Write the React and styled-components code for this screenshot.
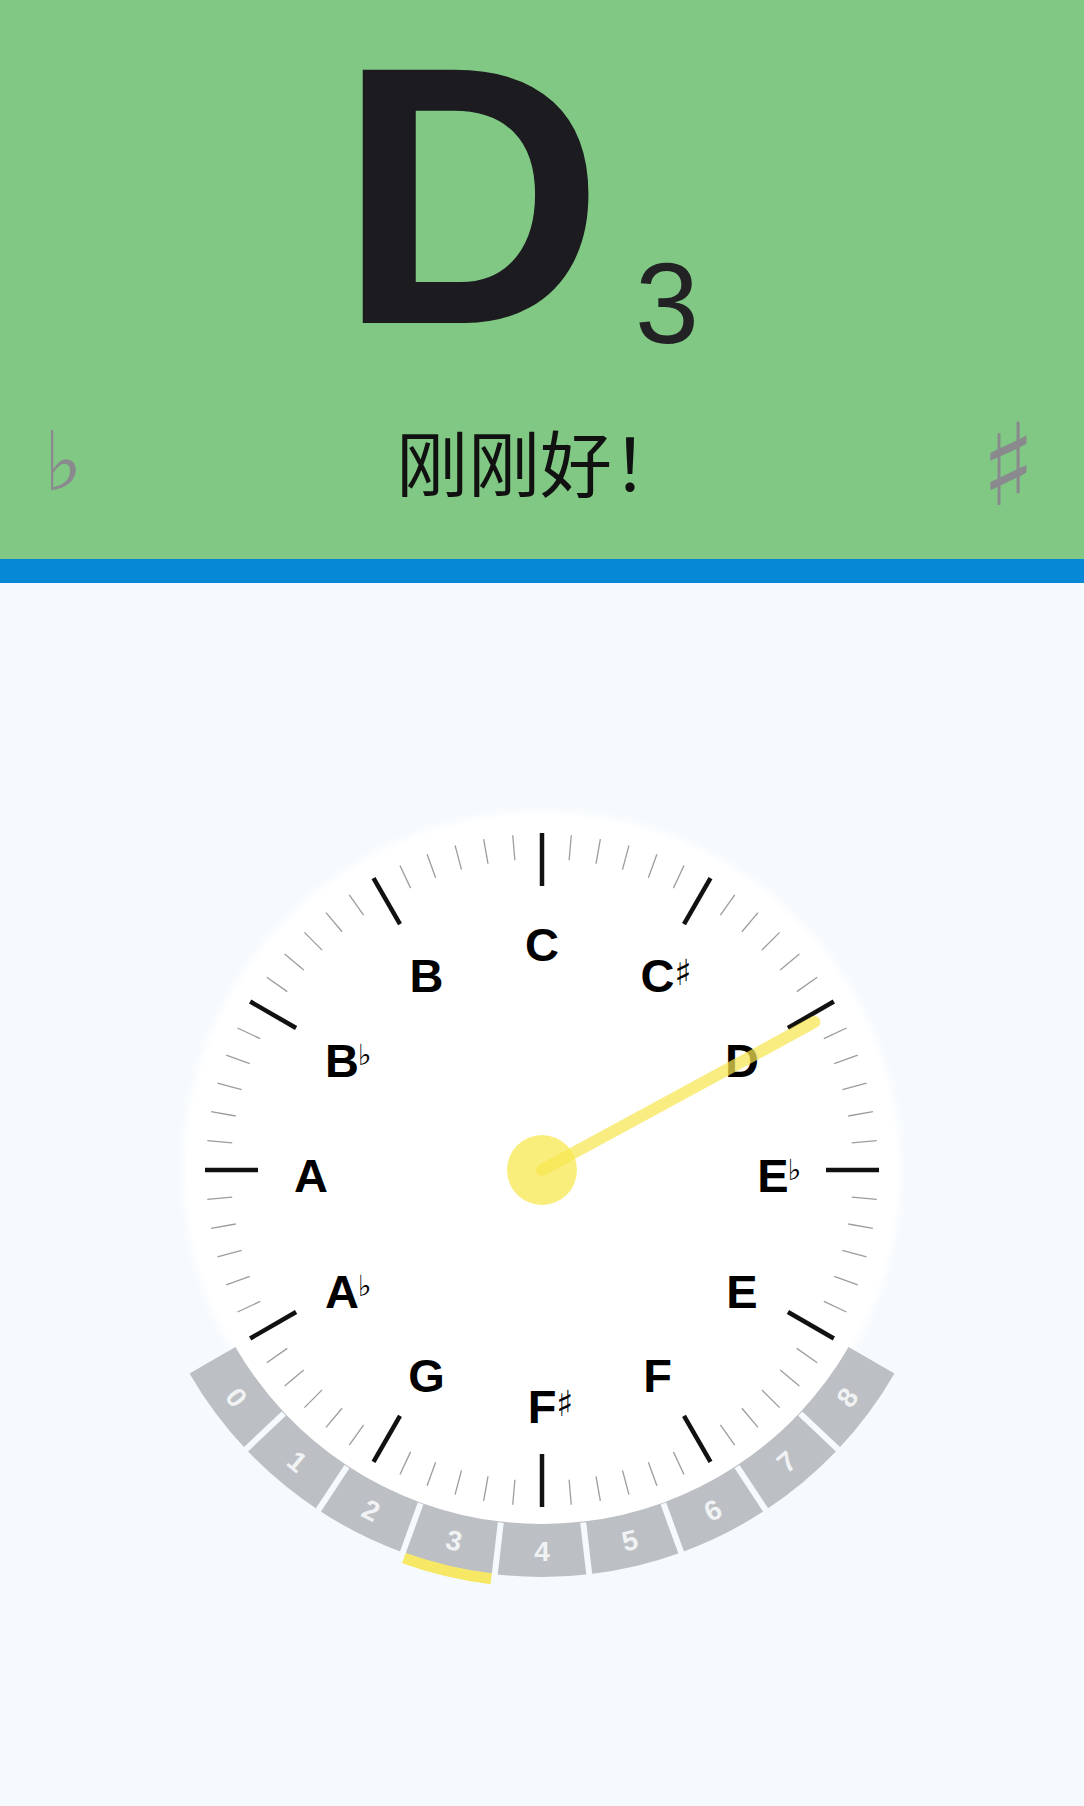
import React from 'react';
import styled, { createGlobalStyle } from 'styled-components';

const GlobalStyle = createGlobalStyle`
  html, body {
    margin: 0;
    padding: 0;
    background: #f5fafe;
  }
  body {
    font-family: "Liberation Sans", Arial, sans-serif;
  }
`;

const BG = '#f5fafe';
const C = 430;

const polar = (r, deg) => {
  const t = (deg * Math.PI) / 180;
  return { x: C + r * Math.sin(t), y: C - r * Math.cos(t) };
};

const notes = [
  { n: 'C' },
  { n: 'C', acc: 'sharp' },
  { n: 'D' },
  { n: 'E', acc: 'flat' },
  { n: 'E' },
  { n: 'F' },
  { n: 'F', acc: 'sharp' },
  { n: 'G' },
  { n: 'A', acc: 'flat' },
  { n: 'A' },
  { n: 'B', acc: 'flat' },
  { n: 'B' },
];

const advance = { A: 0.722, B: 0.722, C: 0.722, D: 0.722, E: 0.667, F: 0.611, G: 0.778 };

const LABEL_SIZE = 47;
const NEEDLE_ANGLE = 61.5;
const CURRENT_OCTAVE = 3;

const Page = styled.div`
  min-height: 1806px;
  display: flex;
  flex-direction: column;
  background: ${BG};
`;

const Header = styled.header`
  height: 559px;
  box-sizing: border-box;
  padding-top: 46px;
  background: #80c884;
  display: flex;
  flex-direction: column;
`;

const NoteRow = styled.div`
  text-align: center;
  padding-right: 47px;
  font-family: "Liberation Sans", Arial, sans-serif;
  font-size: 368px;
  line-height: 300px;
  white-space: nowrap;
`;

const NoteName = styled.span`
  font-weight: 700;
  color: #1c1b1f;
`;

const Octave = styled.span`
  font-size: 115px;
  line-height: 115px;
  color: #222225;
  margin-left: 31px;
  vertical-align: -20px;
`;

const StatusRow = styled.div`
  margin-top: 57px;
  display: grid;
  grid-template-columns: 1fr auto 1fr;
  align-items: center;
  padding: 0 48px 0 44px;
`;

const StatusText = styled.div`
  font-family: "Noto Sans CJK SC", "Noto Sans", sans-serif;
  font-size: 72px;
  line-height: 72px;
  color: #111;
`;

const Accidental = styled.div`
  font-family: "DejaVu Sans", sans-serif;
  color: #8a8a8e;
  font-size: ${(p) => p.$size}px;
  line-height: 72px;
  justify-self: ${(p) => (p.$side === 'left' ? 'start' : 'end')};
  margin-top: ${(p) => p.$shift || 0}px;
`;

const Divider = styled.div`
  height: 24px;
  background: #0788d6;
`;

const DialArea = styled.main`
  display: flex;
  justify-content: center;
  padding-top: 157px;
`;

const DialSvg = styled.svg`
  display: block;
  overflow: visible;
`;

const Label = styled.text`
  font-family: "Liberation Sans", Arial, sans-serif;
  font-weight: 700;
  font-size: ${LABEL_SIZE}px;
  fill: #000;
`;

const AccMark = styled.text`
  font-family: "DejaVu Sans", sans-serif;
  font-size: ${(p) => p.$size}px;
  fill: #000;
`;

const Digit = styled.text`
  font-family: "Liberation Sans", Arial, sans-serif;
  font-weight: 700;
  font-size: 28px;
  fill: #f0f2f4;
`;

const sector = (r1, r2, t1, t2) => {
  const a = polar(r2, t1);
  const b = polar(r2, t2);
  const c = polar(r1, t2);
  const d = polar(r1, t1);
  return `M${a.x} ${a.y} A${r2} ${r2} 0 0 1 ${b.x} ${b.y} L${c.x} ${c.y} A${r1} ${r1} 0 0 0 ${d.x} ${d.y} Z`;
};

const arc = (r, t1, t2) => {
  const a = polar(r, t1);
  const b = polar(r, t2);
  return `M${a.x} ${a.y} A${r} ${r} 0 0 1 ${b.x} ${b.y}`;
};

const Dial = () => {
  const ticks = [];
  for (let i = 0; i < 72; i++) {
    const t = i * 5;
    const major = i % 6 === 0;
    const p1 = polar(major ? 284 : 311, t);
    const p2 = polar(major ? 337 : 336, t);
    ticks.push(
      <line
        key={i}
        x1={p1.x}
        y1={p1.y}
        x2={p2.x}
        y2={p2.y}
        stroke={major ? '#111' : '#9c9c9c'}
        strokeWidth={major ? 4.5 : 1.3}
      />
    );
  }

  // octave band: 9 pieces over 120 degrees around the bottom
  const step = 120 / 9;
  const seg = (k) => [240 - (k + 1) * step, 240 - k * step];
  const octaves = Array.from({ length: 9 }, (_, k) => k);

  const needleEnd = polar(310, NEEDLE_ANGLE);

  return (
    <DialSvg width="860" height="860" viewBox="0 0 860 860">
      <defs>
        <filter id="halo" x="-20%" y="-20%" width="140%" height="140%">
          <feGaussianBlur stdDeviation="5" />
        </filter>
      </defs>
      <circle cx={C} cy={C} r="359" fill="#ffffff" filter="url(#halo)" />
      <circle cx={C} cy={C} r="355" fill="#ffffff" />

      {octaves.map((k) => {
        const [t1, t2] = seg(k);
        return <path key={k} d={sector(354, 407, t1, t2)} fill="#bcbfc3" />;
      })}
      {(() => {
        const [t1, t2] = seg(CURRENT_OCTAVE);
        return <path d={arc(412, t1, t2)} stroke="#f6e764" strokeWidth="11" fill="none" />;
      })()}
      {octaves.slice(1).map((k) => {
        const t = 240 - k * step;
        const p1 = polar(355, t);
        const p2 = polar(424, t);
        return <line key={k} x1={p1.x} y1={p1.y} x2={p2.x} y2={p2.y} stroke={BG} strokeWidth="6" />;
      })}
      {octaves.map((k) => {
        const [t1, t2] = seg(k);
        const t = (t1 + t2) / 2;
        const p = polar(381, t);
        return (
          <Digit
            key={k}
            x={p.x}
            y={p.y}
            textAnchor="middle"
            dominantBaseline="central"
            transform={`rotate(${t - 180} ${p.x} ${p.y})`}
          >
            {k}
          </Digit>
        );
      })}

      {ticks}

      {notes.map((note, i) => {
        const p = polar(231, i * 30);
        const cy = p.y + 5;
        const base = cy + 17;
        const top = cy - 17;
        const right = p.x + (advance[note.n] * LABEL_SIZE) / 2;
        return (
          <g key={i}>
            <Label x={p.x} y={base} textAnchor="middle">
              {note.n}
            </Label>
            {note.acc === 'sharp' && (
              <AccMark $size={36} x={right} y={top + 27}>
                ♯
              </AccMark>
            )}
            {note.acc === 'flat' && (
              <AccMark $size={29} x={right - 1} y={top + 22}>
                ♭
              </AccMark>
            )}
          </g>
        );
      })}

      <circle cx={C} cy={C} r="35" fill="#f9ee7c" />
      <line
        x1={C}
        y1={C}
        x2={needleEnd.x}
        y2={needleEnd.y}
        stroke="#f7e650"
        strokeOpacity="0.72"
        strokeWidth="12"
        strokeLinecap="round"
      />
    </DialSvg>
  );
};

export default function App() {
  return (
    <>
      <GlobalStyle />
      <Page>
        <Header>
          <NoteRow>
            <NoteName>D</NoteName>
            <Octave>3</Octave>
          </NoteRow>
          <StatusRow>
            <Accidental $side="left" $size={82} $shift={4}>♭</Accidental>
            <StatusText>刚刚好！</StatusText>
            <Accidental $side="right" $size={114} $shift={12}>♯</Accidental>
          </StatusRow>
        </Header>
        <Divider />
        <DialArea>
          <Dial />
        </DialArea>
      </Page>
    </>
  );
}
